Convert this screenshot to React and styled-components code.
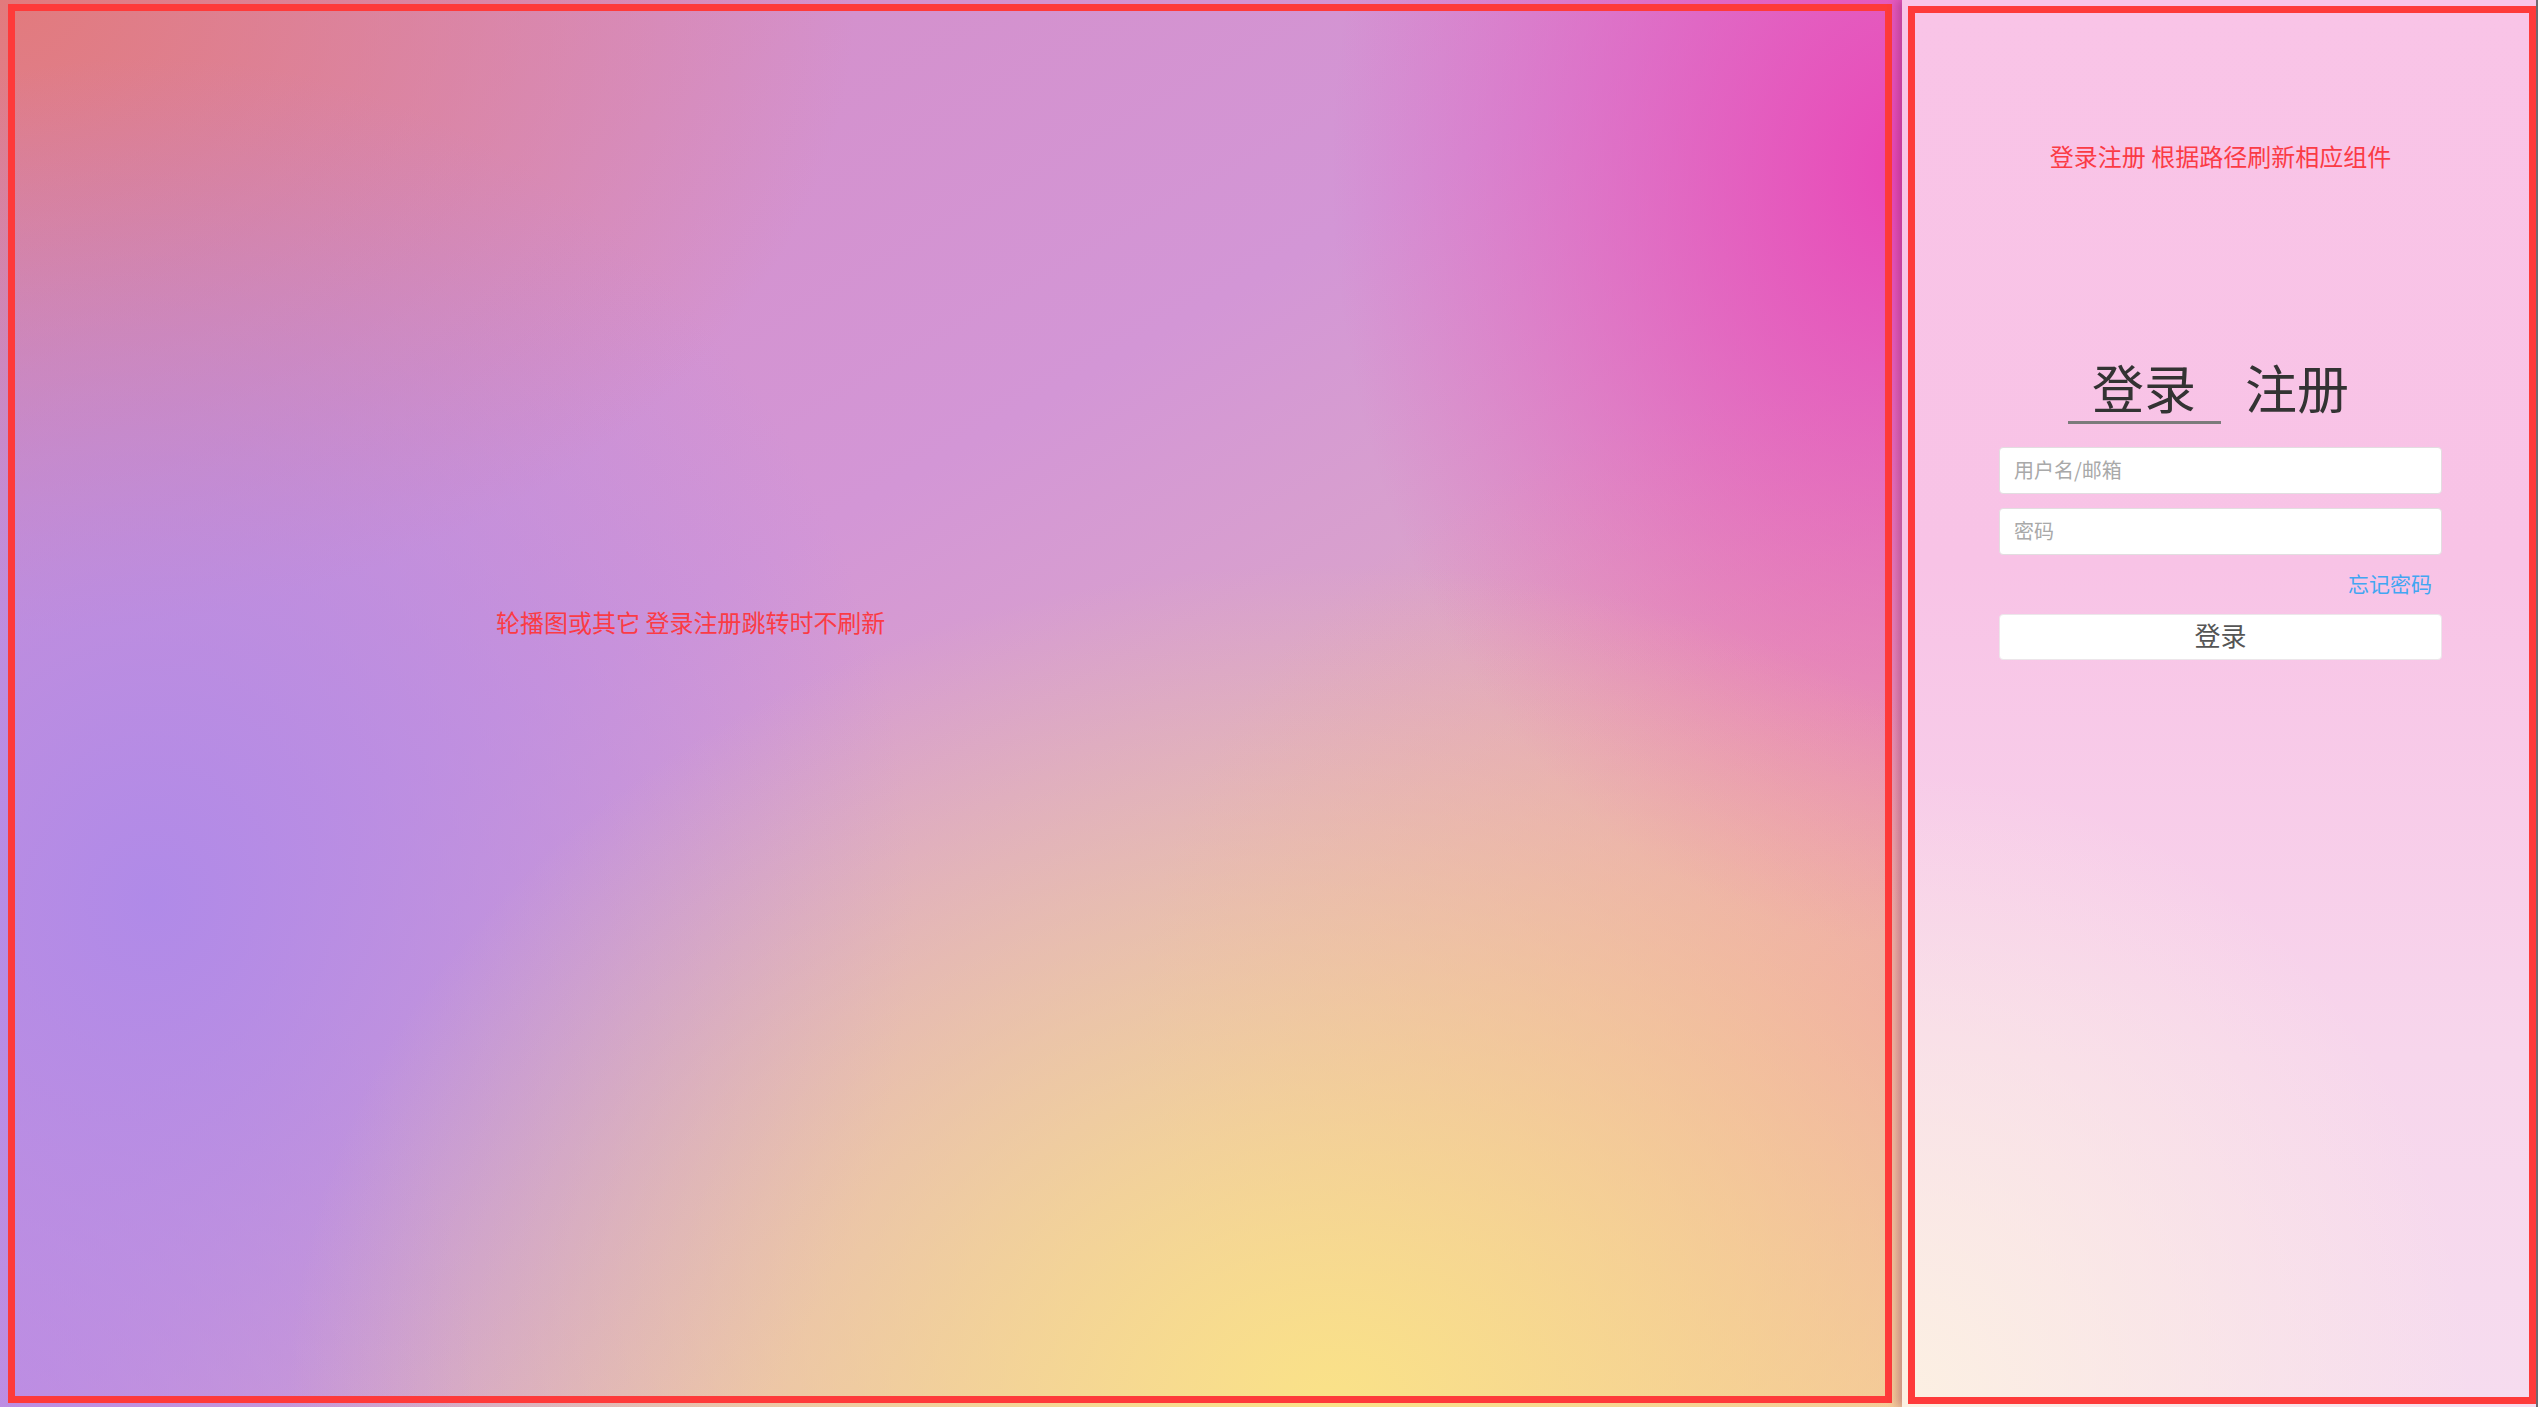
import React, { useState } from "react"
import styled, { createGlobalStyle } from "styled-components"

const GlobalStyle = createGlobalStyle`
  html, body {
    margin: 0;
    padding: 0;
    width: 100%;
    height: 100%;
    overflow: hidden;
  }
  body {
    font-family: "Noto Sans CJK SC", "Noto Sans", sans-serif;
  }
`

const Page = styled.div`
  display: flex;
  width: 100vw;
  height: 100vh;
`

const Stage = styled.div`
  flex: 0 0 1902px;
  display: flex;
  box-sizing: border-box;
  padding: 4px 10px 4px 8px;
  background:
    radial-gradient(ellipse 55% 60% at 70% 100%, rgba(250, 226, 136, 1) 0%, rgba(250, 226, 136, 0) 100%),
    radial-gradient(ellipse 30% 55% at 100% 12%, rgba(233, 72, 184, 1) 0%, rgba(233, 72, 184, 0) 100%),
    radial-gradient(ellipse 40% 60% at 8% 64%, rgba(176, 138, 232, 1) 0%, rgba(176, 138, 232, 0) 100%),
    radial-gradient(ellipse 25% 40% at 0% 100%, rgba(196, 142, 224, 1) 0%, rgba(196, 142, 224, 0) 100%),
    radial-gradient(ellipse 45% 45% at 0% 0%, rgba(226, 122, 124, 1) 0%, rgba(226, 122, 124, 0) 100%),
    radial-gradient(ellipse 40% 45% at 100% 72%, rgba(238, 160, 172, 1) 0%, rgba(238, 160, 172, 0) 100%),
    linear-gradient(150deg, #d58cc4 0%, #d396d6 40%, #dfacc4 70%, #f0c4a0 100%);
`

const Frame = styled.div`
  flex: 1;
  box-sizing: border-box;
  border: 7px solid #fe3a3a;
`

const Carousel = styled(Frame)`
  padding: 593px 0 0 481px;
`

const Note = styled.div`
  font-size: 24px;
  line-height: 36px;
  color: #fb3b45;
`

const Side = styled.div`
  flex: 1;
  display: flex;
  box-sizing: border-box;
  padding: 6px 0 3px 6px;
  border-right: 2px solid #6e6a70;
  box-shadow: -4px 0 9px rgba(110, 20, 80, 0.35);
  background:
    radial-gradient(ellipse 90% 45% at 0% 100%, rgba(252, 240, 226, 1) 0%, rgba(252, 240, 226, 0) 100%),
    linear-gradient(to bottom, #f9c4e7 0%, #f8c3e6 40%, #f7d6ec 75%, #f6dcef 100%);
`

const Panel = styled(Frame)`
  display: flex;
  flex-direction: column;
  align-items: center;
  padding: 125px 3px 0 0;
`

const Tabs = styled.div`
  display: flex;
  margin-top: 187px;
`

const Tab = styled.div`
  width: 153px;
  padding-bottom: 8px;
  text-align: center;
  font-size: 52px;
  line-height: 52px;
  color: #333;
  cursor: pointer;
  border-bottom: 3px solid ${p => (p.$active ? "#7b7b7b" : "transparent")};
`

const Form = styled.form`
  display: flex;
  flex-direction: column;
  width: 443px;
  margin-top: 23px;
`

const Input = styled.input`
  box-sizing: border-box;
  height: 47px;
  padding: 0 14px 2px;
  border: 1px solid #e2dde0;
  border-radius: 4px;
  background: #fff;
  font-family: inherit;
  font-size: 20px;
  color: #333;
  outline: none;
  & + & {
    margin-top: 14px;
  }
  &::placeholder {
    color: #a9a9a9;
  }
`

const Forgot = styled.a`
  align-self: flex-end;
  margin: 13px 10px 16px 0;
  font-size: 21px;
  line-height: 30px;
  color: #42a6f2;
  text-decoration: none;
  cursor: pointer;
`

const Submit = styled.button`
  box-sizing: border-box;
  height: 46px;
  padding: 0 0 5px;
  border: 1px solid #ece6ea;
  border-radius: 4px;
  background: #fff;
  font-family: inherit;
  font-size: 26px;
  color: #555;
  cursor: pointer;
`

export default function App() {
  const [tab, setTab] = useState("login")

  return (
    <>
      <GlobalStyle />
      <Page>
        <Stage>
          <Carousel>
            <Note>轮播图或其它 登录注册跳转时不刷新</Note>
          </Carousel>
        </Stage>
        <Side>
          <Panel>
            <Note>登录注册 根据路径刷新相应组件</Note>
            <Tabs>
              <Tab $active={tab === "login"} onClick={() => setTab("login")}>登录</Tab>
              <Tab $active={tab === "register"} onClick={() => setTab("register")}>注册</Tab>
            </Tabs>
            <Form onSubmit={e => e.preventDefault()}>
              <Input placeholder="用户名/邮箱" />
              <Input type="password" placeholder="密码" />
              <Forgot>忘记密码</Forgot>
              <Submit>登录</Submit>
            </Form>
          </Panel>
        </Side>
      </Page>
    </>
  )
}
